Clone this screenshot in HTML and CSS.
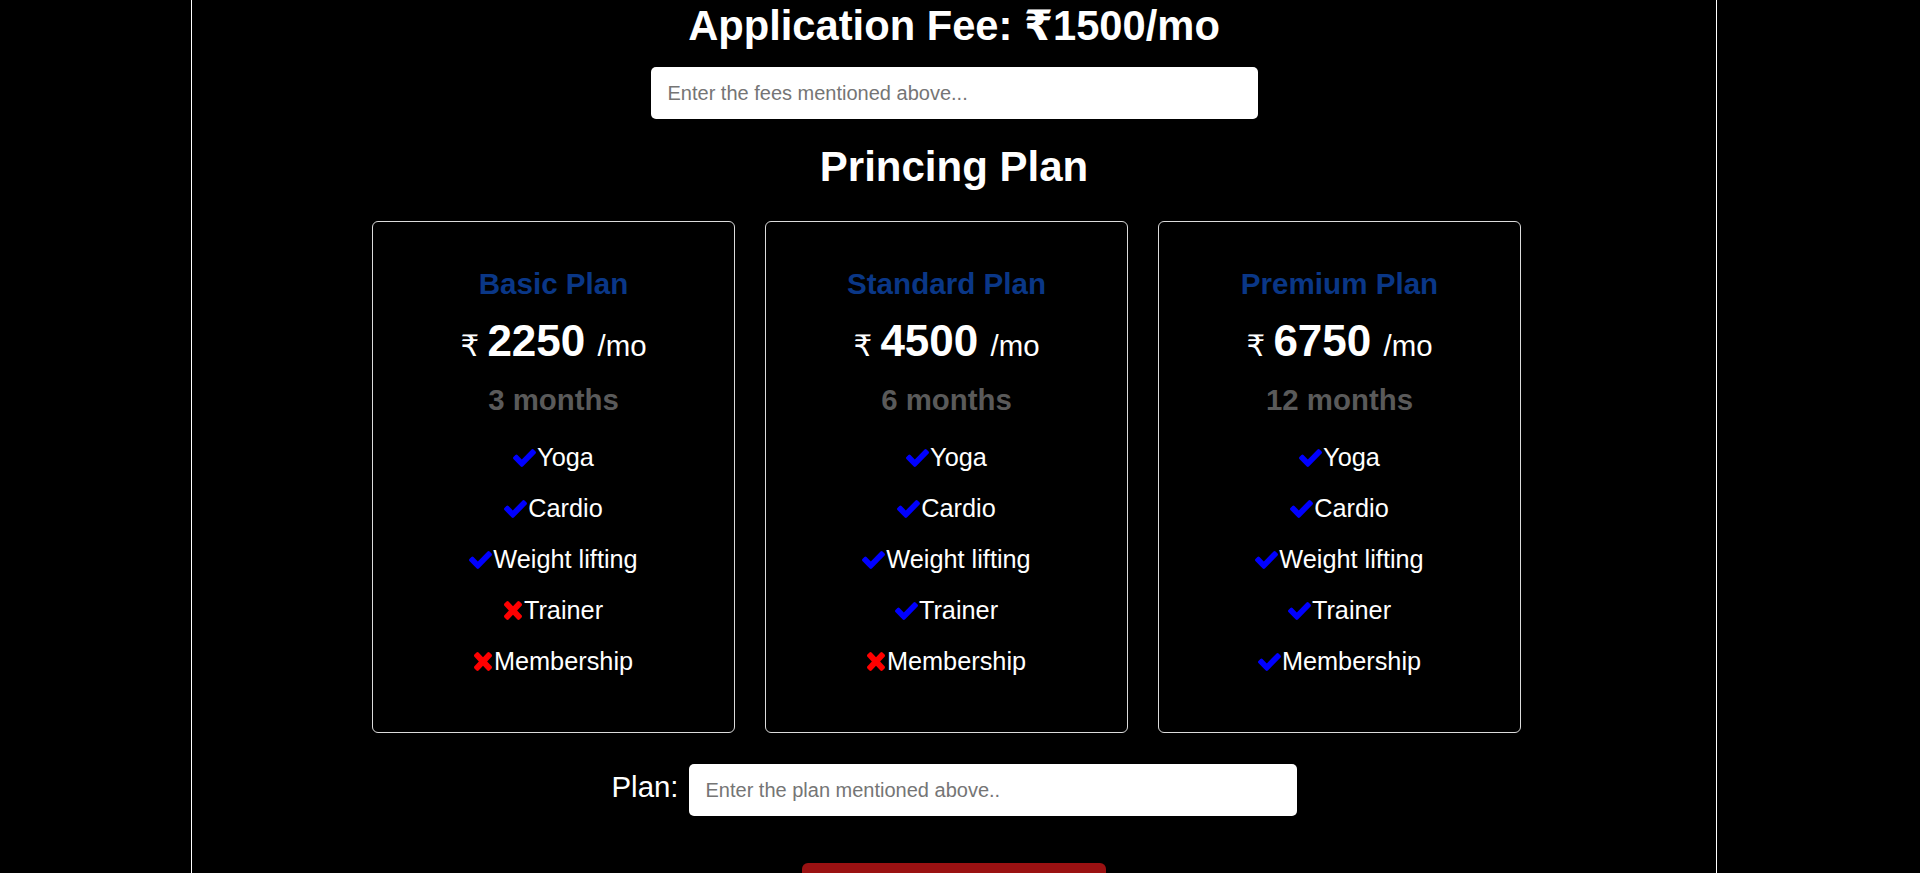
FILE: index.html
```html
<!DOCTYPE html>
<html lang="en">
<head>
<meta charset="utf-8">
<title>Pricing Plan</title>
<link rel="stylesheet" href="styles.css">
</head>
<body>
<div class="page">
  <h1 class="fee-title">Application Fee: ₹1500/mo</h1>
  <input class="field" type="text" placeholder="Enter the fees mentioned above...">
  <h2 class="section-title">Princing Plan</h2>

  <div class="plans">
    <div class="plan">
      <h3 class="plan-name">Basic Plan</h3>
      <p class="price">₹ <strong>2250 </strong>/mo</p>
      <p class="duration">3 months</p>
      <ul class="features">
        <li><svg class="ic ic-check" viewBox="121 334 1550 1188" preserveAspectRatio="none"><path d="M1671 566q0 40-28 68l-724 724-136 136q-28 28-68 28t-68-28l-136-136-362-362q-28-28-28-68t28-68l136-136q28-28 68-28t68 28l294 295 656-657q28-28 68-28t68 28l136 136q28 28 28 68z"/></svg>Yoga</li>
        <li><svg class="ic ic-check" viewBox="121 334 1550 1188" preserveAspectRatio="none"><path d="M1671 566q0 40-28 68l-724 724-136 136q-28 28-68 28t-68-28l-136-136-362-362q-28-28-28-68t28-68l136-136q28-28 68-28t68 28l294 295 656-657q28-28 68-28t68 28l136 136q28 28 28 68z"/></svg>Cardio</li>
        <li><svg class="ic ic-check" viewBox="121 334 1550 1188" preserveAspectRatio="none"><path d="M1671 566q0 40-28 68l-724 724-136 136q-28 28-68 28t-68-28l-136-136-362-362q-28-28-28-68t28-68l136-136q28-28 68-28t68 28l294 295 656-657q28-28 68-28t68 28l136 136q28 28 28 68z"/></svg>Weight lifting</li>
        <li><svg class="ic ic-cross" viewBox="110 366 1188 1188" preserveAspectRatio="none"><path d="M1298 1322q0 40-28 68l-136 136q-28 28-68 28t-68-28l-294-294-294 294q-28 28-68 28t-68-28l-136-136q-28-28-28-68t28-68l294-294-294-294q-28-28-28-68t28-68l136-136q28-28 68-28t68 28l294 294 294-294q28-28 68-28t68 28l136 136q28 28 28 68t-28 68l-294 294 294 294q28 28 28 68z"/></svg>Trainer</li>
        <li><svg class="ic ic-cross" viewBox="110 366 1188 1188" preserveAspectRatio="none"><path d="M1298 1322q0 40-28 68l-136 136q-28 28-68 28t-68-28l-294-294-294 294q-28 28-68 28t-68-28l-136-136q-28-28-28-68t28-68l294-294-294-294q-28-28-28-68t28-68l136-136q28-28 68-28t68 28l294 294 294-294q28-28 68-28t68 28l136 136q28 28 28 68t-28 68l-294 294 294 294q28 28 28 68z"/></svg>Membership</li>
      </ul>
    </div>

    <div class="plan">
      <h3 class="plan-name">Standard Plan</h3>
      <p class="price">₹ <strong>4500 </strong>/mo</p>
      <p class="duration">6 months</p>
      <ul class="features">
        <li><svg class="ic ic-check" viewBox="121 334 1550 1188" preserveAspectRatio="none"><path d="M1671 566q0 40-28 68l-724 724-136 136q-28 28-68 28t-68-28l-136-136-362-362q-28-28-28-68t28-68l136-136q28-28 68-28t68 28l294 295 656-657q28-28 68-28t68 28l136 136q28 28 28 68z"/></svg>Yoga</li>
        <li><svg class="ic ic-check" viewBox="121 334 1550 1188" preserveAspectRatio="none"><path d="M1671 566q0 40-28 68l-724 724-136 136q-28 28-68 28t-68-28l-136-136-362-362q-28-28-28-68t28-68l136-136q28-28 68-28t68 28l294 295 656-657q28-28 68-28t68 28l136 136q28 28 28 68z"/></svg>Cardio</li>
        <li><svg class="ic ic-check" viewBox="121 334 1550 1188" preserveAspectRatio="none"><path d="M1671 566q0 40-28 68l-724 724-136 136q-28 28-68 28t-68-28l-136-136-362-362q-28-28-28-68t28-68l136-136q28-28 68-28t68 28l294 295 656-657q28-28 68-28t68 28l136 136q28 28 28 68z"/></svg>Weight lifting</li>
        <li><svg class="ic ic-check" viewBox="121 334 1550 1188" preserveAspectRatio="none"><path d="M1671 566q0 40-28 68l-724 724-136 136q-28 28-68 28t-68-28l-136-136-362-362q-28-28-28-68t28-68l136-136q28-28 68-28t68 28l294 295 656-657q28-28 68-28t68 28l136 136q28 28 28 68z"/></svg>Trainer</li>
        <li><svg class="ic ic-cross" viewBox="110 366 1188 1188" preserveAspectRatio="none"><path d="M1298 1322q0 40-28 68l-136 136q-28 28-68 28t-68-28l-294-294-294 294q-28 28-68 28t-68-28l-136-136q-28-28-28-68t28-68l294-294-294-294q-28-28-28-68t28-68l136-136q28-28 68-28t68 28l294 294 294-294q28-28 68-28t68 28l136 136q28 28 28 68t-28 68l-294 294 294 294q28 28 28 68z"/></svg>Membership</li>
      </ul>
    </div>

    <div class="plan">
      <h3 class="plan-name">Premium Plan</h3>
      <p class="price">₹ <strong>6750 </strong>/mo</p>
      <p class="duration">12 months</p>
      <ul class="features">
        <li><svg class="ic ic-check" viewBox="121 334 1550 1188" preserveAspectRatio="none"><path d="M1671 566q0 40-28 68l-724 724-136 136q-28 28-68 28t-68-28l-136-136-362-362q-28-28-28-68t28-68l136-136q28-28 68-28t68 28l294 295 656-657q28-28 68-28t68 28l136 136q28 28 28 68z"/></svg>Yoga</li>
        <li><svg class="ic ic-check" viewBox="121 334 1550 1188" preserveAspectRatio="none"><path d="M1671 566q0 40-28 68l-724 724-136 136q-28 28-68 28t-68-28l-136-136-362-362q-28-28-28-68t28-68l136-136q28-28 68-28t68 28l294 295 656-657q28-28 68-28t68 28l136 136q28 28 28 68z"/></svg>Cardio</li>
        <li><svg class="ic ic-check" viewBox="121 334 1550 1188" preserveAspectRatio="none"><path d="M1671 566q0 40-28 68l-724 724-136 136q-28 28-68 28t-68-28l-136-136-362-362q-28-28-28-68t28-68l136-136q28-28 68-28t68 28l294 295 656-657q28-28 68-28t68 28l136 136q28 28 28 68z"/></svg>Weight lifting</li>
        <li><svg class="ic ic-check" viewBox="121 334 1550 1188" preserveAspectRatio="none"><path d="M1671 566q0 40-28 68l-724 724-136 136q-28 28-68 28t-68-28l-136-136-362-362q-28-28-28-68t28-68l136-136q28-28 68-28t68 28l294 295 656-657q28-28 68-28t68 28l136 136q28 28 28 68z"/></svg>Trainer</li>
        <li><svg class="ic ic-check" viewBox="121 334 1550 1188" preserveAspectRatio="none"><path d="M1671 566q0 40-28 68l-724 724-136 136q-28 28-68 28t-68-28l-136-136-362-362q-28-28-28-68t28-68l136-136q28-28 68-28t68 28l294 295 656-657q28-28 68-28t68 28l136 136q28 28 28 68z"/></svg>Membership</li>
      </ul>
    </div>
  </div>

  <div class="plan-row">
    <label class="plan-label" for="plan">Plan:</label>
    <input class="field" id="plan" type="text" placeholder="Enter the plan mentioned above..">
  </div>

  <button class="submit" type="button" aria-label="Submit"></button>
</div>
</body>
</html>
```

FILE: styles.css
```css
html, body {
  margin: 0;
  padding: 0;
  background: #000;
}

body {
  font-family: "Liberation Sans", Arial, "DejaVu Sans", sans-serif;
  color: #fff;
  overflow: hidden;
}

.page {
  box-sizing: content-box;
  width: 1524px;
  margin-left: 191px;
  min-height: 1100px;
  border-left: 1px solid #fff;
  border-right: 1px solid #fff;
  padding-top: 2px;
  display: flex;
  flex-direction: column;
  align-items: center;
}

.fee-title,
.section-title {
  margin: 0;
  font-size: 42px;
  line-height: 48px;
  font-weight: bold;
  color: #fff;
}

.fee-title {
  font-size: 41.7px;
}

.field {
  box-sizing: border-box;
  width: 607px;
  height: 52px;
  border: none;
  border-radius: 5px;
  background: #fff;
  padding: 0 17px;
  font-family: "Liberation Sans", Arial, sans-serif;
  font-size: 20px;
  color: #222;
  outline: none;
}

.field::placeholder {
  color: #757575;
}

.page > .field {
  margin-top: 17px;
}

.section-title {
  margin-top: 24px;
}

.plans {
  margin-top: 30px;
  margin-right: 15px;
  display: flex;
  gap: 30px;
}

.plan {
  box-sizing: border-box;
  width: 363px;
  border: 1px solid #dcdcdc;
  border-radius: 6px;
  padding: 45px 0 56px;
  display: flex;
  flex-direction: column;
  align-items: center;
  text-align: center;
}

.plan-name {
  margin: 0;
  font-size: 29.6px;
  line-height: 34px;
  font-weight: bold;
  color: #0a3787;
}

.price {
  margin: 18px 0 0;
  font-size: 29.4px;
  line-height: 1;
  color: #fff;
}

.price strong {
  font-size: 44px;
  line-height: 1;
  font-weight: bold;
}

.duration {
  margin: 20px 0 0;
  font-size: 29.4px;
  line-height: 34px;
  font-weight: bold;
  color: #5a5a5a;
}

.features {
  list-style: none;
  margin: 26px 0 0;
  padding: 0;
  display: flex;
  flex-direction: column;
  align-items: center;
  gap: 22px;
}

.features li {
  font-size: 25.3px;
  line-height: 29px;
  color: #fff;
  white-space: nowrap;
}

.ic {
  display: inline-block;
  vertical-align: -1px;
  margin-right: 1px;
}

.ic-check {
  width: 23px;
  height: 18px;
  fill: #0000ff;
}

.ic-cross {
  width: 18px;
  height: 19px;
  fill: #ff0000;
  margin-right: 2px;
}

.plan-row {
  margin-top: 31px;
  display: flex;
  align-items: flex-start;
  gap: 10px;
}

.plan-label {
  margin-top: 6px;
  font-size: 29.4px;
  line-height: 34px;
  color: #fff;
}

.plan-row .field {
  width: 608px;
}

.submit {
  margin-top: 47px;
  width: 304px;
  height: 52px;
  border: none;
  border-radius: 6px;
  background: #9b1112;
}
```
